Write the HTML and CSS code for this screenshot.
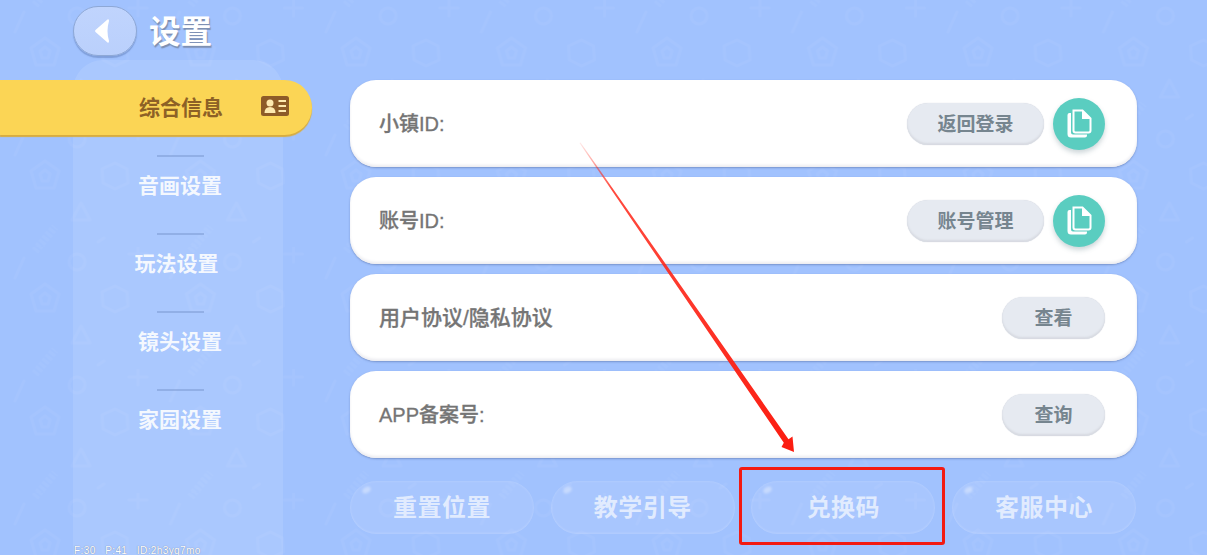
FILE: index.html
```html
<!DOCTYPE html>
<html lang="zh">
<head>
<meta charset="utf-8">
<title>设置</title>
<link rel="stylesheet" href="styles.css">
</head>
<body>
<div class="app">
  <svg class="backdrop" width="1207" height="555" aria-hidden="true">
    <defs>
      <pattern id="tile" width="155.5" height="123" patternUnits="userSpaceOnUse">
        <g fill="none" stroke="#fff" stroke-opacity=".04" stroke-width="3" stroke-linejoin="round" stroke-linecap="round">
          <path d="M45 38 L59 48 L54 65 L36 65 L31 48 Z"/>
          <path d="M45 47 L50 51 L48 58 L42 58 L40 51 Z"/>
          <path d="M115 40 L127 46 L128 60 L115 66 L103 60 L102 46 Z"/>
          <circle cx="77" cy="16" r="8"/>
          <path d="M138 0 V16 M129 8 H147"/>
          <path d="M24 12 L15 32"/>
          <path d="M81 80 L90 97 H72 Z"/>
          <path d="M98 119 L104 115"/>
          <path d="M35 128 L55 104" stroke-width="8" stroke-dasharray="3 2" stroke-linecap="butt" stroke-opacity=".03"/>
          <path d="M35 5 L55 -19" stroke-width="8" stroke-dasharray="3 2" stroke-linecap="butt" stroke-opacity=".03"/>
        </g>
      </pattern>
    </defs>
    <rect width="1207" height="555" fill="url(#tile)"/>
  </svg>

  <aside class="side">
    <header class="head">
      <button class="back" type="button" aria-label="返回">
        <svg width="18" height="28" viewBox="0 0 18 28"><path d="M14.5 2.5 L2.5 13 Q1.5 14 2.5 15 L14.5 25.5 Q16 26.5 16 24 Q13 14 16 4 Q16 1.500 14.500 2.500 Z" fill="#fff"/></svg>
      </button>
      <h1 class="title">设置</h1>
    </header>
    <nav class="nav">
      <a class="item active">
        <span class="item-label">综合信息</span>
        <svg class="card-icon" width="28" height="20" viewBox="0 0 28 20"><rect width="28" height="20" rx="2.500" fill="#8d5b28"/><circle cx="9" cy="7" r="3.500" fill="#fde9b0"/><path d="M3.500 17 Q3.500 11 9 11 Q14.500 11 14.500 17 Z" fill="#fde9b0"/><path d="M17.500 5 H25 M17.500 10 H25 M17.500 15 H25" stroke="#fde9b0" stroke-width="2"/></svg>
      </a>
      <i class="rule"></i>
      <a class="item">音画设置</a>
      <i class="rule"></i>
      <a class="item shifted">玩法设置</a>
      <i class="rule"></i>
      <a class="item">镜头设置</a>
      <i class="rule"></i>
      <a class="item">家园设置</a>
    </nav>
  </aside>

  <main class="panel">
    <section class="rows">
      <div class="row">
        <span class="row-label">小镇ID:</span>
        <button class="pill" type="button">返回登录</button>
        <button class="copy" type="button" aria-label="复制">
          <svg width="26" height="30" viewBox="0 0 26 30"><path d="M5 4 H3.500 Q1.500 4 1.500 6 V25 Q1.500 28.500 5 28.500 H19 Q21 28.500 21 26.500 V25.500 H7 Q5 25.500 5 23.500 Z" fill="#fff"/><path d="M7.500 1.500 H16.500 L24.500 9.500 V21.500 Q24.500 23.500 22.500 23.500 H9.500 Q7.500 23.500 7.500 21.500 Z" fill="none" stroke="#fff" stroke-width="2"/><path d="M16 1.500 V10 H24.500 Z" fill="#fff"/></svg>
        </button>
      </div>
      <div class="row">
        <span class="row-label">账号ID:</span>
        <button class="pill" type="button">账号管理</button>
        <button class="copy" type="button" aria-label="复制">
          <svg width="26" height="30" viewBox="0 0 26 30"><path d="M5 4 H3.500 Q1.500 4 1.500 6 V25 Q1.500 28.500 5 28.500 H19 Q21 28.500 21 26.500 V25.500 H7 Q5 25.500 5 23.500 Z" fill="#fff"/><path d="M7.500 1.500 H16.500 L24.500 9.500 V21.500 Q24.500 23.500 22.500 23.500 H9.500 Q7.500 23.500 7.500 21.500 Z" fill="none" stroke="#fff" stroke-width="2"/><path d="M16 1.500 V10 H24.500 Z" fill="#fff"/></svg>
        </button>
      </div>
      <div class="row">
        <span class="row-label wide">用户协议/隐私协议</span>
        <button class="pill small" type="button">查看</button>
      </div>
      <div class="row">
        <span class="row-label">APP备案号:</span>
        <button class="pill small" type="button">查询</button>
      </div>
    </section>
    <footer class="actions">
      <button class="glass" type="button">重置位置</button>
      <button class="glass" type="button">教学引导</button>
      <button class="glass" type="button">兑换码</button>
      <button class="glass" type="button">客服中心</button>
    </footer>
  </main>

  <div class="debug">F:30&nbsp;&nbsp;&nbsp;P:41&nbsp;&nbsp;&nbsp;ID:2h3yq7mo</div>
  <div class="mark-box"></div>
  <svg class="mark-arrow" width="1207" height="555" aria-hidden="true">
    <defs>
      <linearGradient id="fade" gradientUnits="userSpaceOnUse" x1="580" y1="143" x2="793" y2="452">
        <stop offset="0" stop-color="#ff2a1c" stop-opacity=".1"/>
        <stop offset=".15" stop-color="#ff2a1c" stop-opacity=".85"/>
        <stop offset="1" stop-color="#fb1c10"/>
      </linearGradient>
    </defs>
    <polygon points="579.500,143 580.500,142.500 788.500,439.300 792.500,436.500 794,452 781.500,447 783.800,442.700" fill="url(#fade)"/>
  </svg>
</div>
</body>
</html>
```
FILE: styles.css
```css
* { box-sizing: border-box; }
html, body { margin: 0; padding: 0; }
body {
  background: #a1c2fe;
  font-family: "Noto Sans CJK SC", "Noto Sans", "Liberation Sans", sans-serif;
  overflow: hidden;
}
button { font-family: inherit; border: 0; padding: 0; }

.app {
  position: relative;
  width: 1207px;
  height: 555px;
  overflow: hidden;
  display: flex;
}
.backdrop, .mark-arrow { position: absolute; left: 0; top: 0; }
.backdrop { z-index: 0; }
.mark-arrow { z-index: 3; pointer-events: none; }

.side {
  position: relative;
  z-index: 1;
  width: 350px;
  flex: none;
  display: flex;
  flex-direction: column;
}
.head {
  height: 60px;
  padding: 6px 0 0 73px;
  display: flex;
  align-items: flex-start;
  gap: 12px;
}
.back {
  width: 64px;
  height: 50px;
  border-radius: 25px;
  background: linear-gradient(180deg, #c0d4fd, #bad0fc);
  border: 1px solid #8ea8d6;
  box-shadow: 0 2px 1px rgba(95, 125, 185, .5);
  display: flex;
  align-items: center;
  justify-content: center;
  padding-right: 6px;
}
.title {
  margin: 0;
  font-size: 31.500px;
  line-height: 46px;
  font-weight: 700;
  color: #fff;
  text-shadow: 1px 2px 1px #7d8fb2;
}
.nav {
  flex: 1;
  margin-left: 73px;
  width: 210px;
  padding-top: 20px;
  border-radius: 30px 30px 0 0;
  background: rgba(255, 255, 255, .1);
  display: flex;
  flex-direction: column;
}
.item {
  height: 55px;
  flex: none;
  display: flex;
  align-items: center;
  justify-content: center;
  font-size: 21px;
  font-weight: 700;
  color: rgba(255, 255, 255, .88);
  padding: 0 0 3px 4px;
}
.item.shifted { padding: 0 3px 3px 0; }
.item.active {
  position: relative;
  margin-left: -73px;
  width: 312px;
  padding-left: 139px;
  justify-content: flex-start;
  gap: 38px;
  color: #8d6126;
  background: #fbd555;
  border-radius: 0 28px 28px 0;
  box-shadow: 0 2px 1px #d9ad3f;
}
.item-label { white-space: nowrap; }
.card-icon { flex: none; }
.rule {
  display: block;
  flex: none;
  width: 47px;
  height: 2px;
  margin: 20px auto 1px;
  background: rgba(120, 150, 205, .5);
  transform: translateX(2px);
}

.panel {
  position: relative;
  z-index: 1;
  width: 787px;
  padding-top: 80px;
  display: flex;
  flex-direction: column;
}
.rows { display: flex; flex-direction: column; gap: 10px; }
.row {
  height: 87px;
  padding: 0 32px 0 29px;
  display: flex;
  align-items: center;
  gap: 9px;
  background: #fff;
  border-radius: 26px;
  box-shadow: inset 0 -2px 3px #ececf0, 0 1px 2px rgba(90, 115, 170, .6);
}
.row-label {
  flex: 1;
  font-family: "Liberation Sans", "Noto Sans CJK SC", sans-serif;
  font-size: 20px;
  line-height: 26px;
  font-weight: 500;
  color: #757575;
  -webkit-text-stroke: .3px #757575;
  white-space: nowrap;
}
.row-label.wide { font-size: 21px; }
.pill {
  width: 137px;
  height: 42px;
  border-radius: 21px;
  background: #e6eaf1;
  box-shadow: inset 0 -2px 2px #d7dae1, 0 0 1px #c8ccd6;
  font-size: 19px;
  font-weight: 700;
  color: #76858f;
  flex: none;
  padding-bottom: 3px;
}
.pill.small { width: 103px; }
.copy {
  width: 52px;
  height: 52px;
  flex: none;
  border-radius: 50%;
  background: #5acdc0;
  box-shadow: 0 3px 5px rgba(90, 120, 130, .3);
  display: flex;
  align-items: center;
  justify-content: center;
}

.actions {
  margin-top: 23px;
  display: flex;
  gap: 16.700px;
}
.glass {
  position: relative;
  width: 184px;
  height: 53px;
  border-radius: 27px;
  background: rgba(255, 255, 255, .08);
  box-shadow: inset 0 0 3px rgba(255, 255, 255, .2), inset 0 -2px 2px rgba(255, 255, 255, .05);
  font-size: 24px;
  letter-spacing: .5px;
  font-weight: 700;
  color: rgba(255, 255, 255, .66);
  padding-bottom: 4px;
}
.glass::before {
  content: "";
  position: absolute;
  left: 12px;
  top: 6px;
  width: 9px;
  height: 6px;
  border-radius: 50%;
  background: rgba(255, 255, 255, .35);
  transform: rotate(-30deg);
  filter: blur(1px);
}

.debug {
  position: absolute;
  z-index: 2;
  left: 74px;
  top: 545px;
  font-family: "Liberation Sans", sans-serif;
  font-size: 10px;
  line-height: 12px;
  letter-spacing: .4px;
  color: #fff;
  text-shadow: 0 0 1px #5a6a8a;
  white-space: nowrap;
}
.mark-box {
  position: absolute;
  z-index: 3;
  left: 739px;
  top: 467px;
  width: 206px;
  height: 78px;
  border: 3px solid #f31a12;
  border-radius: 3px;
}
```
